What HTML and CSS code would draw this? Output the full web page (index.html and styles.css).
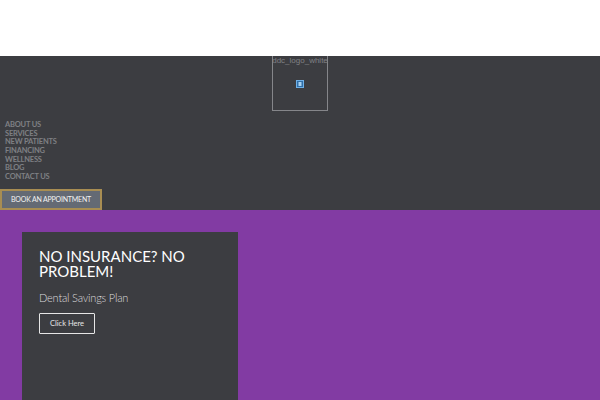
FILE: index.html
```
<!DOCTYPE html>
<html lang="en">
<head>
<meta charset="utf-8">
<title>Dental</title>
<link rel="stylesheet" href="styles.css">
</head>
<body>
<div class="topbar"></div>
<header class="header">
  <div class="logo-row">
    <div class="logo">
      <span class="logo-alt">ddc_logo_white</span>
      <svg class="logo-icon" width="8" height="8" viewBox="0 0 8 8"><rect width="8" height="8" fill="#6fb0e6"/><rect x="1" y="1" width="6" height="6" fill="#2f6ea8"/><rect x="2.5" y="2" width="3" height="4" fill="#a9d2f0"/></svg>
    </div>
  </div>
  <nav class="nav">
    <a>ABOUT US</a>
    <a>SERVICES</a>
    <a>NEW PATIENTS</a>
    <a>FINANCING</a>
    <a>WELLNESS</a>
    <a>BLOG</a>
    <a>CONTACT US</a>
  </nav>
  <a class="book">BOOK AN APPOINTMENT</a>
</header>
<main class="hero">
  <section class="card">
    <h1 class="card-title">NO INSURANCE? NO PROBLEM!</h1>
    <p class="card-sub">Dental Savings Plan</p>
    <a class="card-btn">Click Here</a>
  </section>
</main>
</body>
</html>
```
FILE: styles.css
```
html, body { margin: 0; padding: 0; }
body { width: 600px; height: 400px; overflow: hidden; background: #fff; font-family: "Lato", "Liberation Sans", sans-serif; }
.topbar { height: 56px; background: #fff; }
.header { height: 154px; background: #3c3d41; display: flex; flex-direction: column; align-items: flex-start; }
.logo-row { align-self: stretch; display: flex; justify-content: center; }
.logo { width: 56px; height: 55px; box-sizing: border-box; border: 1px solid #85868a; border-top: 0; display: flex; flex-direction: column; align-items: center; }
.logo-alt { font-family: "Liberation Sans", sans-serif; font-size: 8px; line-height: 9px; color: #808185; white-space: nowrap; }
.logo-icon { margin-top: 15px; }
.nav { display: flex; flex-direction: column; margin: 10px 0 0 5px; }
.nav a { font-size: 7.5px; line-height: 8.65px; font-weight: 700; color: #7f8084; letter-spacing: -0.2px; }
.book { box-sizing: border-box; width: 102px; height: 21px; margin-top: 7px; background: #646a74; border: 2px solid #a88d52; color: #f2f2f2; font-size: 7px; font-weight: 400; line-height: 17px; text-align: center; letter-spacing: -0.2px; }
.hero { height: 190px; background: #823ba3; padding: 22px 0 0 22px; box-sizing: border-box; overflow: hidden; }
.card { box-sizing: border-box; width: 216px; height: 200px; background: #3c3d41; padding: 17px 17px; color: #fff; }
.card-title { margin: 0; font-size: 15px; line-height: 15px; font-weight: 400; color: #fff; }
.card-sub { margin: 12px 0 0; font-size: 11px; line-height: 14px; font-weight: 300; color: #dcdcde; letter-spacing: -0.2px; }
.card-btn { display: block; box-sizing: border-box; width: 56px; height: 21px; margin-top: 8px; border: 1px solid #e6e6e6; border-radius: 1px; color: #e6e6e6; font-size: 7.5px; line-height: 19px; text-align: center; }
```
